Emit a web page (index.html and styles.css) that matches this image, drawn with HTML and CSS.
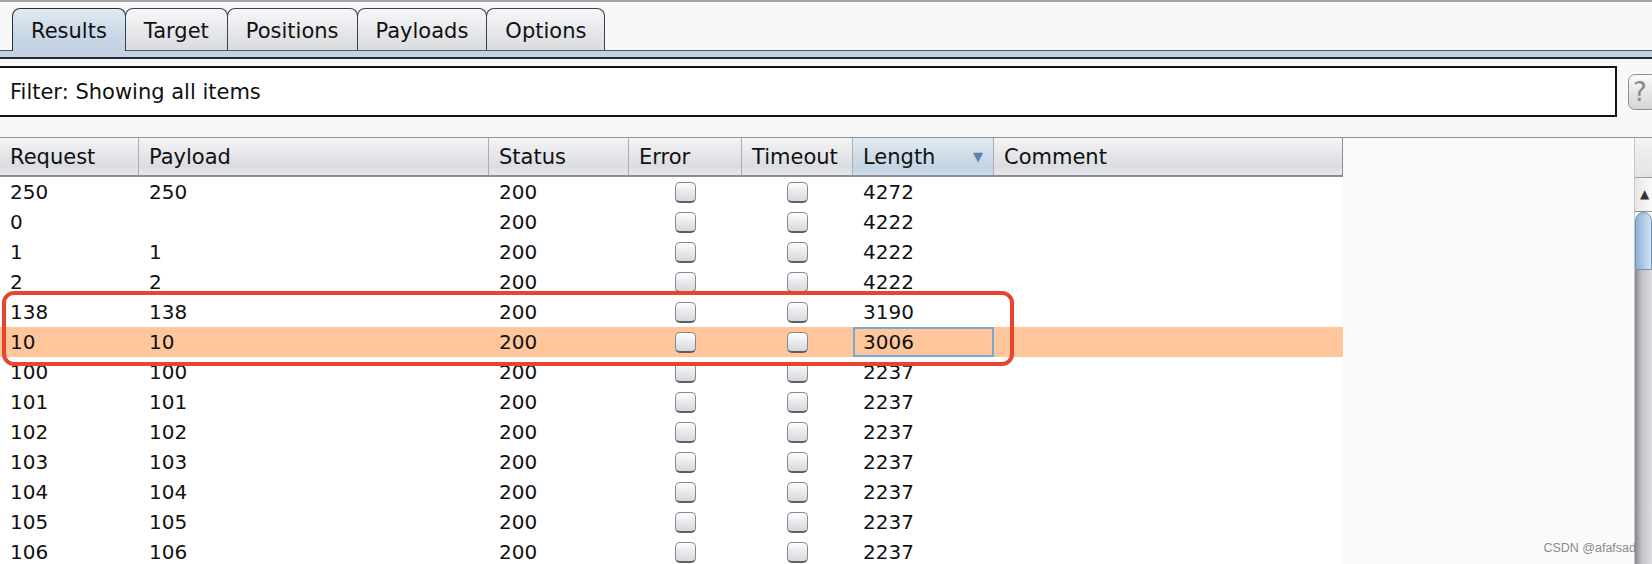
FILE: index.html
```html
<!DOCTYPE html>
<html lang="en">
<head>
  <meta charset="UTF-8" />
  <title>Intruder results</title>
  <link rel="stylesheet" href="styles.css">
</head>
<body>
  <div class="topline"></div>

  <div class="tabs">
    <div class="tab active">Results</div>
    <div class="tab">Target</div>
    <div class="tab">Positions</div>
    <div class="tab">Payloads</div>
    <div class="tab">Options</div>
  </div>
  <div class="strip"></div>

  <div class="filter-row">
    <div class="filter">Filter: Showing all items</div>
    <div class="help">?</div>
  </div>

  <div class="main">
    <div class="table-area">
      <div class="grid">
        <div class="head">
          <div class="hc">Request</div>
          <div class="hc">Payload</div>
          <div class="hc">Status</div>
          <div class="hc">Error</div>
          <div class="hc">Timeout</div>
          <div class="hc sorted">Length <span class="arrow">▼</span></div>
          <div class="hc last">Comment</div>
        </div>

        <div class="row"><div class="cell">250</div><div class="cell">250</div><div class="cell">200</div><div class="cell cb"><span class="check"></span></div><div class="cell cb"><span class="check"></span></div><div class="cell">4272</div><div class="cell"></div></div>
        <div class="row"><div class="cell">0</div><div class="cell"></div><div class="cell">200</div><div class="cell cb"><span class="check"></span></div><div class="cell cb"><span class="check"></span></div><div class="cell">4222</div><div class="cell"></div></div>
        <div class="row"><div class="cell">1</div><div class="cell">1</div><div class="cell">200</div><div class="cell cb"><span class="check"></span></div><div class="cell cb"><span class="check"></span></div><div class="cell">4222</div><div class="cell"></div></div>
        <div class="row"><div class="cell">2</div><div class="cell">2</div><div class="cell">200</div><div class="cell cb"><span class="check"></span></div><div class="cell cb"><span class="check"></span></div><div class="cell">4222</div><div class="cell"></div></div>
        <div class="row"><div class="cell">138</div><div class="cell">138</div><div class="cell">200</div><div class="cell cb"><span class="check"></span></div><div class="cell cb"><span class="check"></span></div><div class="cell">3190</div><div class="cell"></div></div>
        <div class="row sel"><div class="cell">10</div><div class="cell">10</div><div class="cell">200</div><div class="cell cb"><span class="check"></span></div><div class="cell cb"><span class="check"></span></div><div class="cell focus">3006</div><div class="cell"></div></div>
        <div class="row"><div class="cell">100</div><div class="cell">100</div><div class="cell">200</div><div class="cell cb"><span class="check"></span></div><div class="cell cb"><span class="check"></span></div><div class="cell">2237</div><div class="cell"></div></div>
        <div class="row"><div class="cell">101</div><div class="cell">101</div><div class="cell">200</div><div class="cell cb"><span class="check"></span></div><div class="cell cb"><span class="check"></span></div><div class="cell">2237</div><div class="cell"></div></div>
        <div class="row"><div class="cell">102</div><div class="cell">102</div><div class="cell">200</div><div class="cell cb"><span class="check"></span></div><div class="cell cb"><span class="check"></span></div><div class="cell">2237</div><div class="cell"></div></div>
        <div class="row"><div class="cell">103</div><div class="cell">103</div><div class="cell">200</div><div class="cell cb"><span class="check"></span></div><div class="cell cb"><span class="check"></span></div><div class="cell">2237</div><div class="cell"></div></div>
        <div class="row"><div class="cell">104</div><div class="cell">104</div><div class="cell">200</div><div class="cell cb"><span class="check"></span></div><div class="cell cb"><span class="check"></span></div><div class="cell">2237</div><div class="cell"></div></div>
        <div class="row"><div class="cell">105</div><div class="cell">105</div><div class="cell">200</div><div class="cell cb"><span class="check"></span></div><div class="cell cb"><span class="check"></span></div><div class="cell">2237</div><div class="cell"></div></div>
        <div class="row"><div class="cell">106</div><div class="cell">106</div><div class="cell">200</div><div class="cell cb"><span class="check"></span></div><div class="cell cb"><span class="check"></span></div><div class="cell">2237</div><div class="cell"></div></div>
      </div>
    </div>

    <div class="scroll">
      <div class="corner"></div>
      <div class="up">▲</div>
      <div class="thumb"></div>
      <div class="track"></div>
    </div>
  </div>

  <div class="mark"></div>
  <div class="watermark">CSDN @afafsad</div>
</body>
</html>
```

FILE: styles.css
```css
* {
  box-sizing: border-box;
}

body {
  margin: 0;
  height: 100vh;
  overflow: hidden;
  position: relative;
  background-color: #f8f8f8;
  font-family: "DejaVu Sans", sans-serif;
  font-size: 20px;
  color: #111111;
}

.topline {
  height: 2px;
  background-color: #a2a5aa;
}

/* tabs */

.tabs {
  display: flex;
  align-items: flex-end;
  padding: 6px 0 0 12px;
  border-bottom: 1px solid #4b5763;
  font-size: 21px;
}

.tab {
  height: 42px;
  padding: 2px 18px 0;
  display: flex;
  align-items: center;
  border: 1px solid #38424d;
  border-bottom: none;
  border-radius: 8px 8px 0 0;
  margin-right: -1px;
  background: linear-gradient(#f7f7f9, #e6e7ea 55%, #dadbdf);
}

.tab.active {
  height: 43px;
  margin-bottom: -1px;
  padding-bottom: 1px;
  border-color: #26313c;
  background: linear-gradient(#e2eaf2, #c9d8e6 60%, #c2d2e1);
}

.strip {
  height: 8px;
  background-color: #c2d2e1;
  border-bottom: 2px solid #222c36;
}

/* filter */

.filter-row {
  display: flex;
  align-items: center;
  padding-top: 7px;
  margin-bottom: 20px;
}

.filter {
  flex: 1;
  height: 51px;
  margin-left: -3px;
  padding-left: 11px;
  display: flex;
  align-items: center;
  border: 2px solid #141414;
  background-color: #ffffff;
  font-size: 21px;
}

.help {
  flex-shrink: 0;
  width: 30px;
  height: 36px;
  margin-left: 11px;
  margin-right: -6px;
  padding-left: 4px;
  border: 1px solid #8d8f92;
  border-radius: 7px;
  background: linear-gradient(#fbfbfb, #e3e3e4 60%, #d6d6d8);
  color: #8a8a8a;
  font-size: 26px;
  line-height: 34px;
}

/* table */

.main {
  display: flex;
  height: 427px;
  border-top: 1px solid #8f939a;
}

.table-area {
  flex: 1;
  background-color: #fafafa;
}

.grid {
  width: 1343px;
  background-color: #ffffff;
}

.head,
.row {
  display: grid;
  grid-template-columns: 139px 350px 140px 113px 111px 141px 349px;
}

.head {
  height: 39px;
  border-bottom: 2px solid #8a8e94;
  background: linear-gradient(#f4f4f6, #e4e5e8 50%, #dcdde1 75%, #e6e7ea);
  font-size: 21px;
}

.hc {
  display: flex;
  align-items: center;
  padding-left: 10px;
  border-right: 1px solid #aaacaf;
}

.hc.last {
  border-right-color: #8a8e94;
}

.hc.sorted {
  justify-content: space-between;
  padding-right: 10px;
  background: linear-gradient(#e3ebf2, #ccdbe8 55%, #c3d4e3 80%, #cfdcea);
}

.arrow {
  font-size: 13px;
  color: #5a83b0;
}

.row {
  height: 30px;
  line-height: 30px;
}

.row.sel {
  background-color: #ffc59b;
}

.cell {
  padding-left: 10px;
  white-space: nowrap;
}

.cell.cb {
  display: flex;
  align-items: center;
  justify-content: center;
  padding-left: 0;
}

.cell.focus {
  box-shadow: inset 0 0 0 2px #7aa7d7;
}

.check {
  width: 21px;
  height: 21px;
  border: 1px solid #85888d;
  border-bottom: 2px solid #5c5f64;
  border-radius: 5px;
  background: linear-gradient(#fefefe, #e9eaed 50%, #d7d8dc);
}

/* scrollbar */

.scroll {
  width: 18px;
  display: flex;
  flex-direction: column;
  border-left: 1px solid #c4c6c9;
}

.corner {
  height: 39px;
  background: linear-gradient(#f3f3f4, #e3e3e5);
}

.up {
  height: 35px;
  padding-left: 5px;
  border-top: 1px solid #9a9da1;
  border-bottom: 1px solid #8a8d92;
  background: linear-gradient(to right, #e6e6e7, #fafafa);
  color: #333333;
  font-size: 12px;
  line-height: 32px;
}

.thumb {
  height: 58px;
  border: 1px solid #6f8fb3;
  border-radius: 9px 9px 0 0;
  background: linear-gradient(to right, #8fb1d7, #d2e2f2);
}

.track {
  flex: 1;
  background: linear-gradient(to right, #83868b, #c3c5c8 40%, #dcdde0);
}

/* annotation */

.mark {
  position: absolute;
  left: 2px;
  top: 291px;
  width: 1012px;
  height: 75px;
  border: 4px solid #e9442c;
  border-radius: 12px;
}

.watermark {
  position: absolute;
  right: 16px;
  top: 541px;
  font-family: "Liberation Sans", sans-serif;
  font-size: 12.5px;
  color: #8c8c8c;
}
```
